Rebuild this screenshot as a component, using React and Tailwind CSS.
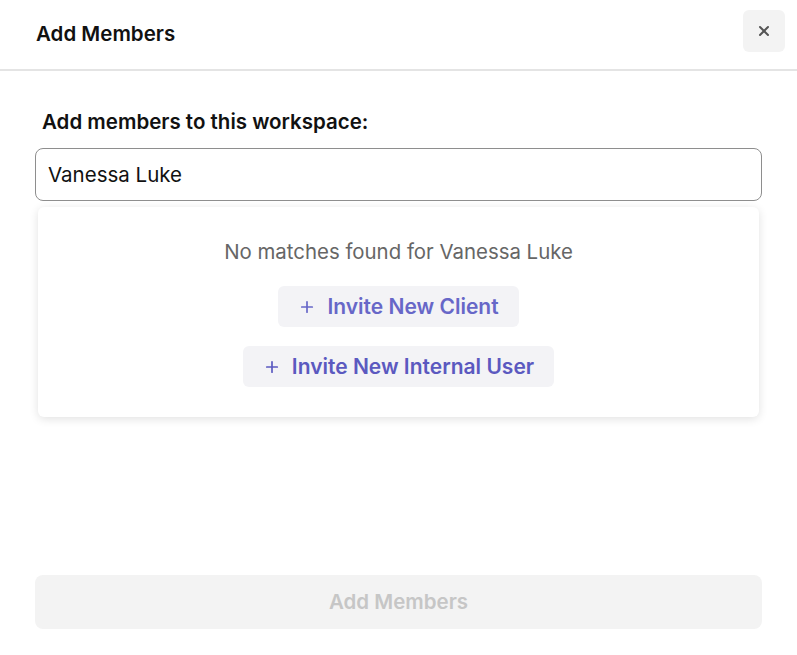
import { X, Plus } from "lucide-react";

export default function App() {
    return (
        <div className="w-[797px] h-[655px] bg-white flex flex-col font-['Inter',sans-serif] text-[#111]">
            {/* Header */}
            <div className="h-[71px] flex items-center justify-between pl-9 pr-3 border-b-2 border-[#e4e4e4]">
                <h2 className="text-[20.5px] font-semibold">Add Members</h2>
                <button className="w-[42px] h-[42px] mt-[-8px] rounded-md bg-[#f3f3f3] flex items-center justify-center text-[#555]">
                    <X size={16} strokeWidth={3} />
                </button>
            </div>

            {/* Body */}
            <div className="flex-1 flex flex-col px-[35px]">
                <label className="mt-[39px] ml-[7px] text-[20.5px] font-semibold leading-6">
                    Add members to this workspace:
                </label>
                <div className="mt-[14px] h-[53px] border border-[#8e8e8e] rounded-lg flex items-center px-3 pt-[2px]">
                    <span className="text-[20.5px]">Vanessa Luke</span>
                </div>

                {/* Dropdown */}
                <div className="mx-[3px] mt-[6px] h-[210px] bg-white rounded-md shadow-[0_2px_10px_rgba(0,0,0,0.12)] flex flex-col items-center">
                    <p className="mt-[33px] text-[20.4px] text-[#666] leading-6">No matches found for Vanessa Luke</p>
                    <button className="mt-[22px] h-[41px] px-[20px] rounded-md bg-[#f3f3f6] flex items-center gap-[11px] text-[#6767c8] text-[21px] font-semibold">
                        <Plus size={18} strokeWidth={2.25} />
                        Invite New Client
                    </button>
                    <button className="mt-[19px] h-[41px] px-[20px] rounded-md bg-[#f3f3f6] flex items-center gap-[11px] text-[#5b59c0] text-[21px] font-semibold">
                        <Plus size={18} strokeWidth={2.25} />
                        Invite New Internal User
                    </button>
                </div>

                <div className="flex-1" />

                <button className="mb-[26px] h-[54px] rounded-lg bg-[#f3f3f3] text-[#c6c6c6] text-[20.5px] font-semibold">
                    Add Members
                </button>
            </div>
        </div>
    );
}
